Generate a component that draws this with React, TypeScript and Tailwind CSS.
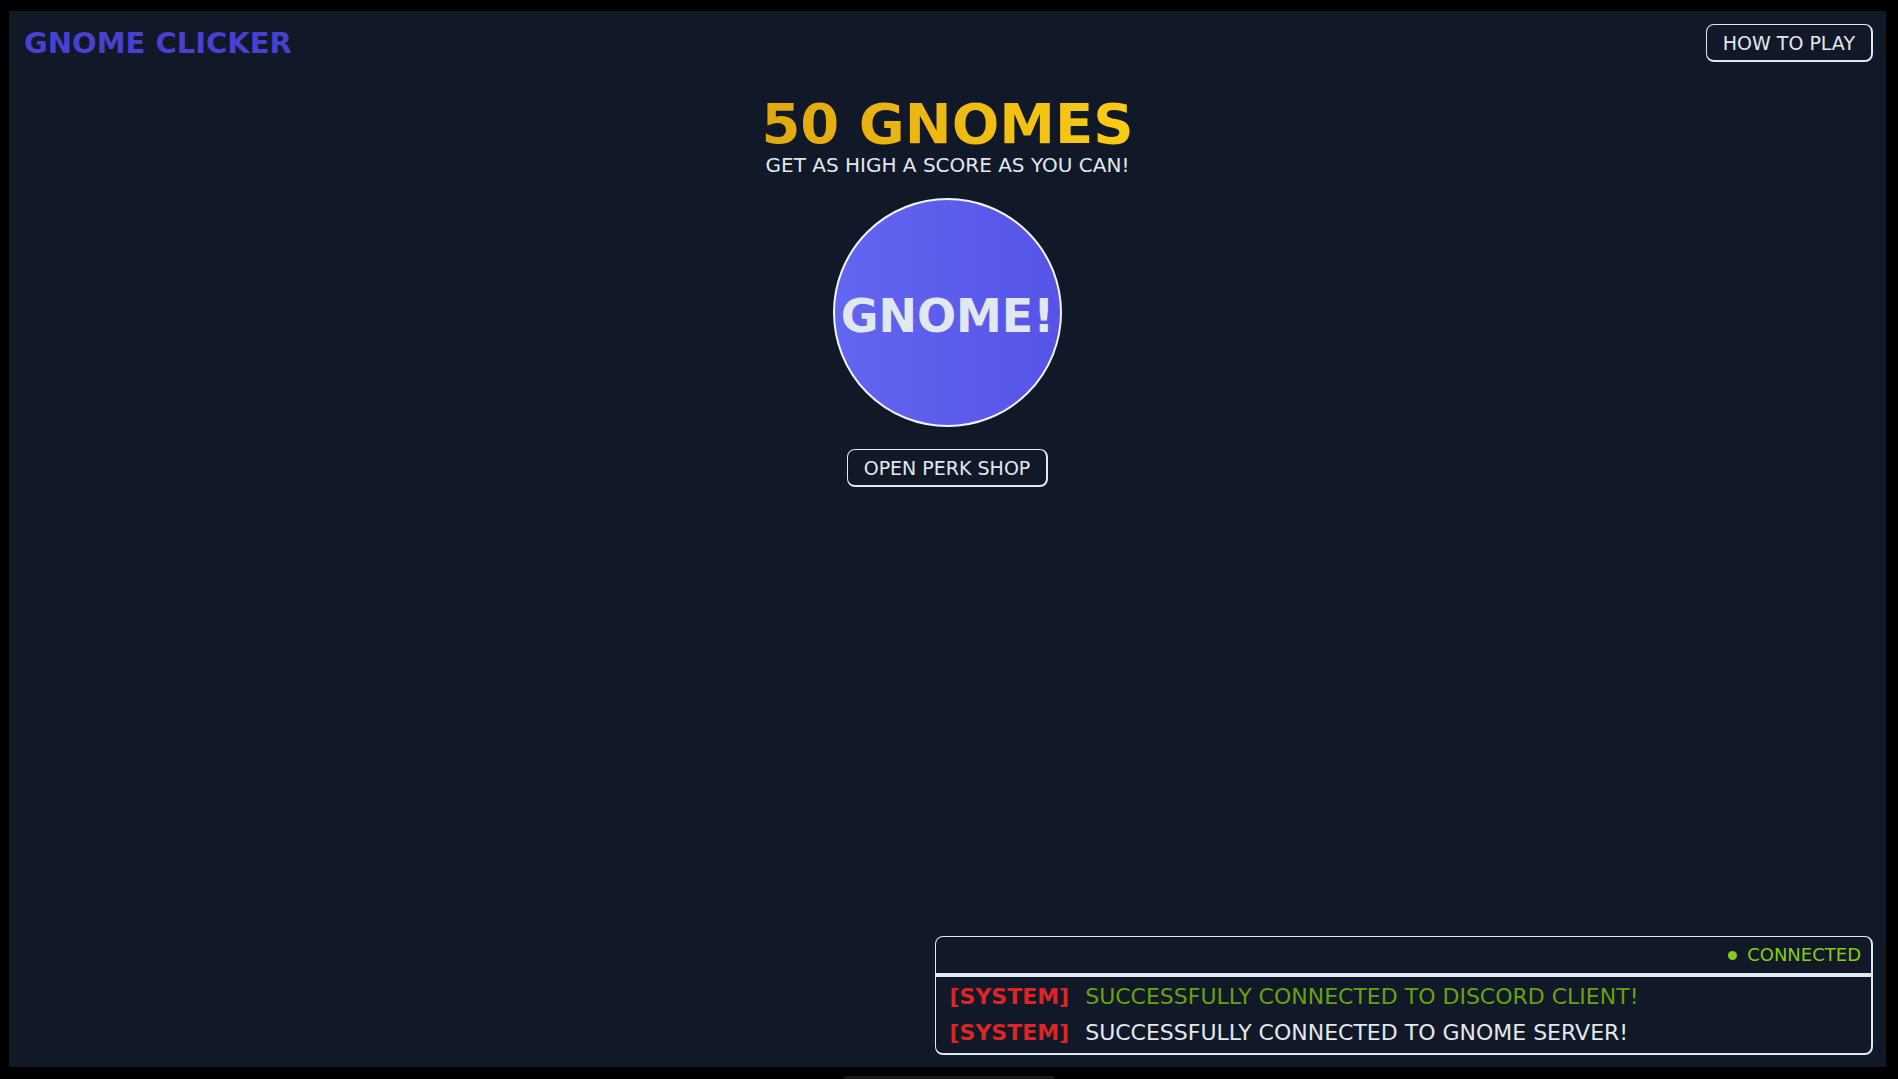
import { useState } from "react";

const outline =
  "rounded-lg border border-r-2 border-b-2 border-[#e2e8f0]";

const messages = [
  { text: "SUCCESSFULLY CONNECTED TO DISCORD CLIENT!", tone: "text-[#65a30d]" },
  { text: "SUCCESSFULLY CONNECTED TO GNOME SERVER!", tone: "text-[#e2e8f0]" },
];

function OutlineButton({ children }: { children: string }) {
  return (
    <button
      type="button"
      className={`${outline} flex h-[38px] cursor-pointer items-center justify-center px-4 text-[19px] leading-6 whitespace-nowrap text-[#e2e8f0]`}
    >
      {children}
    </button>
  );
}

function ChatPanel() {
  return (
    <section
      aria-label="Chat"
      className={`${outline} mr-[13px] mb-3 w-1/2 self-end overflow-hidden`}
    >
      <div className="flex h-10 items-center justify-end gap-[10px] border-b-4 border-[#e2e8f0] pr-[10px] text-lg leading-6 text-[#84cc16]">
        <span className="size-[9px] rounded-full bg-[#84cc16]" />
        <span>CONNECTED</span>
      </div>
      <ul className="py-[2px] pl-[14px] text-[22px] leading-9 whitespace-nowrap">
        {messages.map((message) => (
          <li key={message.text} className={`${message.tone} flex gap-4`}>
            <strong className="font-bold text-[#dc2626]">[SYSTEM]</strong>
            <span>{message.text}</span>
          </li>
        ))}
      </ul>
    </section>
  );
}

export default function App() {
  const [gnomes, setGnomes] = useState(50);

  return (
    <div className="relative h-screen overflow-hidden bg-black pt-[11px] pr-3 pb-3 pl-[9px] font-['DejaVu_Sans',sans-serif]">
      <div className="flex h-full flex-col bg-[#111827]">
        <header className="flex items-center justify-between px-[13px] pt-[13px]">
          <h1 className="pl-[2px] text-[29px] leading-9 font-bold text-[#4840cf]">
            GNOME CLICKER
          </h1>
          <OutlineButton>HOW TO PLAY</OutlineButton>
        </header>

        <main className="mt-8 flex flex-1 flex-col items-center">
          <h2 className="bg-linear-to-r from-[#e0a80f] to-[#facc15] bg-clip-text text-[56px] leading-[60px] font-bold text-transparent">
            {gnomes} GNOMES
          </h2>
          <p className="text-[20px] leading-[22px] text-[#e2e8f0]">
            GET AS HIGH A SCORE AS YOU CAN!
          </p>
          <button
            type="button"
            onClick={() => setGnomes(gnomes + 1)}
            className="my-[22px] flex size-[229px] cursor-pointer items-center justify-center rounded-full border-2 border-[#f1f5f9] bg-linear-to-r from-[#6366f1] to-[#5753e8] pt-[6px] text-[46px] leading-none font-bold text-[#e2e8f0]"
          >
            GNOME!
          </button>
          <OutlineButton>OPEN PERK SHOP</OutlineButton>
        </main>

        <ChatPanel />
      </div>
      <div className="absolute bottom-0 left-1/2 h-[3px] w-[211px] -translate-x-1/2 rounded-t-sm bg-[#1c1815]" />
    </div>
  );
}
